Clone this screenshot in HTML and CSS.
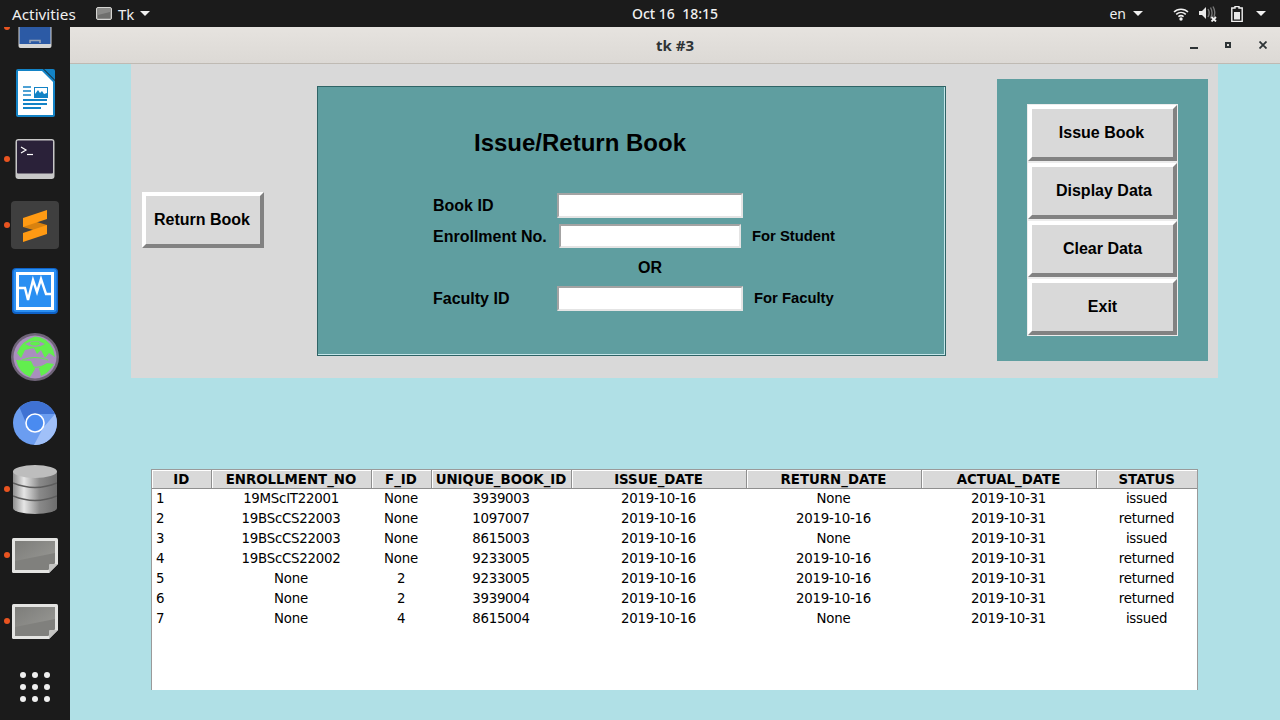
FILE: index.html
```html
<!DOCTYPE html>
<html>
<head>
    <title>tk #3</title>
    <link rel="stylesheet" href="styles.css">
</head>
<body>
    <div class="topbar">
        <div class="top_left">
            <span class="activities">Activities</span>
            <svg class="app_icon" width="16" height="13" viewBox="0 0 16 13"><rect x="0.5" y="0.5" width="15" height="12" rx="1.5" fill="#8a8a88" stroke="#d4d4d2"/><path d="M2 8 L14 5 V11 H2 Z" fill="#6f6f6d"/></svg>
            <span class="app_name">Tk</span>
            <span class="caret"></span>
        </div>
        <div class="clock">Oct 16&nbsp; 18:15</div>
        <div class="top_right">
            <span class="lang">en</span>
            <span class="caret caret_lang"></span>
            <svg class="tray_wifi" width="16" height="14" viewBox="0 0 16 14" fill="none" stroke="#f2f2f2" stroke-width="1.5"><path d="M1 5 C4.5 1.2 11.5 1.2 15 5"/><path d="M3.2 7.4 C6 4.8 10 4.8 12.8 7.4"/><path d="M5.4 9.6 C7 8.4 9 8.4 10.6 9.6"/><circle cx="8" cy="12" r="1.7" fill="#f2f2f2" stroke="none"/></svg>
            <svg class="tray_sound" width="18" height="16" viewBox="0 0 18 16"><path d="M0 5 H3 L7 1 V13 L3 9 H0 Z" fill="#e8e8e8"/><path d="M9 3 C10.5 5.5 10.5 8.5 9 11 M11.5 1.5 C13.5 5 13.5 9 11.5 12.5 M14 0.5 C16 4 16 8 15 11" fill="none" stroke="#777" stroke-width="1.4"/><path d="M12.5 11 L17 15.5 M17 11 L12.5 15.5" stroke="#f2f2f2" stroke-width="1.8"/></svg>
            <svg class="tray_batt" width="12" height="16" viewBox="0 0 12 16"><path d="M4 0.5 H8 V2 H11.2 V15.4 H0.8 V2 H4 Z" fill="none" stroke="#f2f2f2" stroke-width="1.4"/><rect x="3" y="6" width="6" height="7.5" fill="#e8e8e8"/></svg>
            <span class="caret caret_sys"></span>
        </div>
    </div>

    <div class="desk">
        <div class="dock">
            <div class="dock_item running first_item">
                <svg width="34" height="42" viewBox="0 0 34 42"><rect x="0.5" y="0" width="33" height="42" rx="2" fill="#d6d6d6"/><rect x="1.5" y="0" width="31" height="38" fill="#2c5aa5"/><path d="M12 37 V34.5 H22 V37" fill="none" stroke="#9aa6b8" stroke-width="1.5"/></svg>
            </div>
            <div class="dock_item">
                <svg width="40" height="48" viewBox="0 0 40 48"><path d="M1 2 Q1 0 3 0 H28 L40 12 V46 Q40 48 38 48 H3 Q1 48 1 46 Z" fill="#1383c6"/><path d="M3 2 H27 L38 13 V46 H3 Z" fill="#fff"/><path d="M29 0 H38 Q40 0 40 2 V11 Z" fill="#1383c6"/><path d="M8 18 H16 M8 22 H16 M8 26 H16" stroke="#1383c6" stroke-width="1.6"/><rect x="19.5" y="18.5" width="13" height="10" fill="#fff" stroke="#1383c6"/><path d="M20 28 V25 L23 21 L25 24 L27 22 L29 25 L32 24 V28 Z" fill="#1383c6"/><path d="M8 31 H32 M8 35 H32 M8 39 H26" stroke="#1383c6" stroke-width="1.8"/></svg>
            </div>
            <div class="dock_item running">
                <svg width="40" height="40" viewBox="0 0 40 40"><rect x="0.5" y="0" width="39" height="40" rx="3" fill="#c8c8c8"/><rect x="2" y="1.5" width="36" height="33" rx="1" fill="#2a2139"/><path d="M6 8 L11 11 L6 14" fill="none" stroke="#fff" stroke-width="1.2"/><path d="M12 15.5 H18" stroke="#fff" stroke-width="1.2"/></svg>
            </div>
            <div class="dock_item running">
                <svg width="48" height="48" viewBox="0 0 48 48"><rect width="48" height="48" rx="4" fill="#3f3f3f"/><path d="M12 26 L36 33 V24 L12 17 Z" fill="#d9820f"/><path d="M12 17 L36 9 V18 L12 26 Z" fill="#ff9a13"/><path d="M12 32 L36 24 V33 L12 41 Z" fill="#ff9a13"/></svg>
            </div>
            <div class="dock_item">
                <svg width="46" height="46" viewBox="0 0 46 46"><rect width="46" height="46" rx="4" fill="#0f63c9"/><rect x="1.5" y="1" width="43" height="43" rx="3" fill="#2a8ff2"/><rect x="5.5" y="5.5" width="35" height="35" fill="#2a8ff2" stroke="#fff" stroke-width="3"/><path d="M6 20 H13 L16 32 L21 12 L25 24 L29 11 L34 26 H40" fill="none" stroke="#fff" stroke-width="2.4"/></svg>
            </div>
            <div class="dock_item">
                <svg width="48" height="48" viewBox="0 0 48 48"><circle cx="24" cy="24" r="24" fill="#6f6478"/><circle cx="24" cy="24" r="21.5" fill="#a98fbe"/><path d="M6 20 Q10 8 24 3.5 Q36 4 42 16 L44 24 L38 20 L34 25 L30 17 L26 21 L23 15 L14 17 L10 25 Z" fill="#62ee4e"/><path d="M5 27 L20 28 L24 36 L19 44 Q8 40 5 27 Z" fill="#62ee4e"/><path d="M28 35 L36 30 L43 31 Q38 40 30 43 Z" fill="#62ee4e"/><path d="M14 11 Q24 5 34 11 Q24 17 14 11 Z" fill="#a98fbe"/><ellipse cx="24" cy="10.5" rx="5" ry="2" fill="#62ee4e"/><path d="M11 27 Q24 22 37 27 M18 33 Q26 36 34 32" fill="none" stroke="#62ee4e" stroke-width="1"/></svg>
            </div>
            <div class="dock_item">
                <svg width="44" height="44" viewBox="0 0 44 44"><circle cx="22" cy="22" r="22" fill="#6b9df0"/><path d="M6.5 6.5 A22 22 0 0 1 42 13 L22 13 A9 9 0 0 0 13 22 Z" fill="#3f72d3"/><path d="M42 13 A22 22 0 0 1 21 44 L30 27 Z" fill="#a0c0f8"/><circle cx="22" cy="22" r="9" fill="#4a8bf0" stroke="#fff" stroke-width="1.6"/></svg>
            </div>
            <div class="dock_item running">
                <svg width="44" height="49" viewBox="0 0 44 49"><defs><linearGradient id="db_side" x1="0" x2="1" y1="0" y2="0"><stop offset="0" stop-color="#8f8f8f"/><stop offset="0.25" stop-color="#e6e6e6"/><stop offset="0.6" stop-color="#8a8a8a"/><stop offset="1" stop-color="#6e6e6e"/></linearGradient></defs><rect x="0" y="6" width="44" height="37" fill="url(#db_side)"/><ellipse cx="22" cy="43" rx="22" ry="6" fill="url(#db_side)"/><ellipse cx="22" cy="6.5" rx="22" ry="6.5" fill="#bdbdbd"/><path d="M0 18 Q22 27 44 18 M0 31 Q22 40 44 31" fill="none" stroke="#5c5c5c" stroke-width="1.6"/></svg>
            </div>
            <div class="dock_item running">
                <svg width="46" height="35" viewBox="0 0 46 35"><defs><linearGradient id="shot_fill" x1="0" x2="1" y1="0" y2="1"><stop offset="0" stop-color="#7d7d7a"/><stop offset="1" stop-color="#9c9c98"/></linearGradient><g id="shot_icon"><path d="M1.5 0 H44.5 Q46 0 46 1.5 V26 L37 35 H1.5 Q0 35 0 33.5 V1.5 Q0 0 1.5 0 Z" fill="#e4e4e2"/><path d="M3 3 H43 V25 L36 32 H3 Z" fill="url(#shot_fill)"/><path d="M3 23 L43 15 V25 L36 32 H3 Z" fill="#80807d"/><path d="M37 35 V27 Q37 26 38 26 H46 Z" fill="#c4c4c2"/></g></defs><use href="#shot_icon"/></svg>
            </div>
            <div class="dock_item running">
                <svg width="46" height="35" viewBox="0 0 46 35"><use href="#shot_icon"/></svg>
            </div>
            <div class="dock_item">
                <div class="app_grid"><i></i><i></i><i></i><i></i><i></i><i></i><i></i><i></i><i></i></div>
            </div>
        </div>

        <div class="window">
            <div class="titlebar">
                <span class="win_title">tk #3</span>
                <div class="win_btns">
                    <svg width="8" height="3" class="btn_min" viewBox="0 0 8 3"><rect width="8" height="2" fill="#2e3436"/></svg>
                    <svg width="6" height="7" class="btn_max" viewBox="0 0 6 7"><rect width="6" height="6" fill="#2e3436"/><rect x="2" y="2" width="2" height="2" fill="#e0ddd9"/></svg>
                    <svg width="8" height="8" class="btn_close" viewBox="0 0 8 8"><path d="M0.5 0.5 L7.5 7.5 M7.5 0.5 L0.5 7.5" stroke="#2e3436" stroke-width="1.8"/></svg>
                </div>
            </div>
            <div class="app_area">
                <div class="main_panel">
                    <button class="tk_btn return_btn">Return Book</button>
                    <div class="form_box">
                        <h1 class="form_title">Issue/Return Book</h1>
                        <div class="form_row row_book">
                            <label class="form_lbl lbl_wide">Book ID</label>
                            <input type="text" class="entry">
                        </div>
                        <div class="form_row row_enroll">
                            <label class="form_lbl lbl_enroll">Enrollment No.</label>
                            <input type="text" class="entry entry_small">
                            <span class="hint">For Student</span>
                        </div>
                        <div class="or_lbl">OR</div>
                        <div class="form_row row_faculty">
                            <label class="form_lbl lbl_wide">Faculty ID</label>
                            <input type="text" class="entry">
                            <span class="hint">For Faculty</span>
                        </div>
                    </div>
                    <div class="side_box">
                        <button class="tk_btn side_btn">Issue Book</button>
                        <button class="tk_btn side_btn side_display">Display Data</button>
                        <button class="tk_btn side_btn side_clear">Clear Data</button>
                        <button class="tk_btn side_btn side_clear">Exit</button>
                    </div>
                </div>

                <div class="table_box">
                    <table class="tree">
                        <colgroup>
                            <col class="c59"><col class="c160"><col class="c60"><col class="c140"><col class="c175"><col class="c175"><col class="c175"><col class="c101">
                        </colgroup>
                        <thead>
                            <tr><th>ID</th><th>ENROLLMENT_NO</th><th>F_ID</th><th>UNIQUE_BOOK_ID</th><th>ISSUE_DATE</th><th>RETURN_DATE</th><th>ACTUAL_DATE</th><th>STATUS</th></tr>
                        </thead>
                        <tbody>
                            <tr><td>1</td><td>19MScIT22001</td><td>None</td><td>3939003</td><td>2019-10-16</td><td>None</td><td>2019-10-31</td><td>issued</td></tr>
                            <tr><td>2</td><td>19BScCS22003</td><td>None</td><td>1097007</td><td>2019-10-16</td><td>2019-10-16</td><td>2019-10-31</td><td>returned</td></tr>
                            <tr><td>3</td><td>19BScCS22003</td><td>None</td><td>8615003</td><td>2019-10-16</td><td>None</td><td>2019-10-31</td><td>issued</td></tr>
                            <tr><td>4</td><td>19BScCS22002</td><td>None</td><td>9233005</td><td>2019-10-16</td><td>2019-10-16</td><td>2019-10-31</td><td>returned</td></tr>
                            <tr><td>5</td><td>None</td><td>2</td><td>9233005</td><td>2019-10-16</td><td>2019-10-16</td><td>2019-10-31</td><td>returned</td></tr>
                            <tr><td>6</td><td>None</td><td>2</td><td>3939004</td><td>2019-10-16</td><td>2019-10-16</td><td>2019-10-31</td><td>returned</td></tr>
                            <tr><td>7</td><td>None</td><td>4</td><td>8615004</td><td>2019-10-16</td><td>None</td><td>2019-10-31</td><td>issued</td></tr>
                        </tbody>
                    </table>
                </div>
            </div>
        </div>
    </div>
</body>
</html>
```

FILE: styles.css
```css
* { box-sizing: border-box; }
html, body { margin: 0; height: 100%; }
body { width: 1280px; height: 720px; overflow: hidden; font-family: "Liberation Sans", Arial, sans-serif; background-color: #1b1b1b; display: flex; flex-direction: column; }

/* top bar */
.topbar { height: 27px; flex: none; background-color: #1b1b1b; color: #f0f0f0; font-family: "Noto Sans", sans-serif; font-size: 14px; display: grid; grid-template-columns: 1fr auto 1fr; align-items: center; position: relative; z-index: 2; }
.top_left { display: flex; align-items: center; padding-left: 12px; }
.activities { width: 84px; font-size: 15.3px; }
.app_icon { margin-right: 6px; }
.app_name { width: 22px; font-size: 15px; }
.caret { width: 0; height: 0; border-left: 5px solid transparent; border-right: 5px solid transparent; border-top: 5px solid #f0f0f0; display: block; }
.clock { margin-left: 70px; font-weight: 500; }
.top_right { display: flex; align-items: center; justify-content: flex-end; }
.lang { margin-right: 7px; }
.caret_lang { margin-right: 30px; }
.tray_wifi { margin-right: 10px; }
.tray_sound { margin-right: 14px; }
.tray_batt { margin-right: 13px; }
.caret_sys { margin-right: 14px; }

.desk { flex: 1; display: flex; min-height: 0; }

/* dock */
.dock { width: 70px; flex: none; background-color: #1b1b1b; overflow: hidden; }
.dock_item { height: 66px; display: flex; align-items: center; justify-content: center; position: relative; }
.first_item { margin-top: -33px; }
.running::before { content: ""; position: absolute; left: 4px; top: 30px; width: 6px; height: 6px; border-radius: 50%; background-color: #e95420; }
.app_grid { width: 30px; display: grid; grid-template-columns: repeat(3, 6px); gap: 6px; }
.app_grid i { width: 6px; height: 6px; border-radius: 50%; background-color: #f0f0f0; display: block; }

/* window */
.window { flex: 1; display: flex; flex-direction: column; min-width: 0; }
.titlebar { height: 37px; flex: none; background: linear-gradient(#e6e3df, #dcd9d5); border-bottom: 1px solid #bfbab3; display: flex; align-items: center; justify-content: center; position: relative; }
.win_title { font-family: "Noto Sans", sans-serif; font-weight: 700; font-size: 15px; color: #2e3436; }
.win_btns { position: absolute; left: 1120px; top: 14px; display: flex; align-items: flex-start; }
.btn_min { margin-top: 6px; margin-right: 27px; }
.btn_max { margin-top: 1px; margin-right: 28px; }

.app_area { flex: 1; background-color: #b0e0e6; padding-left: 61px; }
.main_panel { width: 1087px; height: 314px; background-color: #d9d9d9; display: flex; align-items: flex-start; }

.tk_btn { font-family: "Liberation Sans", Arial, sans-serif; font-weight: 700; font-size: 16px; color: #000; background-color: #d9d9d9; border: 4px solid; border-color: #fff #828282 #828282 #fff; padding: 0 2px 0 0; display: block; }
.return_btn { width: 122px; height: 56px; margin: 128px 0 0 11px; }

.form_box { width: 629px; height: 270px; margin: 22px 0 0 53px; background-color: #5f9ea0; border: 1px solid #2f6466; box-shadow: inset -1px -1px 0 #c4e6ea; padding-left: 115px; color: #000; }
.form_title { font-size: 24px; font-weight: 700; margin: 41px 0 0 41px; line-height: 30px; }
.form_row { display: flex; align-items: center; }
.row_book { margin-top: 35px; height: 25px; }
.row_enroll { margin-top: 6px; height: 24px; }
.row_faculty { margin-top: 7px; height: 25px; }
.form_lbl { font-size: 16px; font-weight: 700; }
.lbl_wide { width: 124px; }
.lbl_enroll { width: 126px; margin-top: 1px; }
.entry { width: 186px; height: 25px; background-color: #fff; border: 2px solid; border-color: #a3a3a3 #e4e4e4 #e4e4e4 #a3a3a3; padding: 0; }
.entry_small { width: 182px; height: 24px; }
.hint { font-size: 14.8px; font-weight: 700; margin: 0 0 2px 11px; }
.row_enroll .hint { margin-bottom: 0; }
.or_lbl { width: 434px; margin-top: 9px; text-align: center; font-size: 16px; font-weight: 700; line-height: 22px; }

.side_box { width: 211px; height: 282px; margin: 15px 0 0 51px; background-color: #5f9ea0; padding: 26px 0 0 31px; }
.side_btn { width: 149px; height: 56px; margin-bottom: 2px; box-shadow: 0 0 0 1px #ececec; }
.side_display { padding: 0 0 0 3px; }
.side_clear { padding: 0; }

/* table */
.table_box { width: 1047px; height: 221px; margin: 91px 0 0 20px; background-color: #fff; border: 1px solid #9a9a9a; border-width: 1px 1px 0 1px; }
.tree { width: 1045px; border-collapse: collapse; table-layout: fixed; font-family: "DejaVu Sans", sans-serif; font-size: 13.33px; letter-spacing: -0.25px; color: #000; }
.c59 { width: 59px; }
.c60 { width: 60px; }
.c101 { width: 101px; }
.c160 { width: 160px; }
.c140 { width: 140px; }
.c175 { width: 175px; }
.tree th { height: 18px; padding: 1px 0 0 0; background-color: #d9d9d9; font-weight: 700; letter-spacing: 0; text-align: center; border-right: 1px solid #8f8f8f; border-bottom: 1px solid #8f8f8f; box-shadow: inset 1px 1px 0 #fff; line-height: 17px; overflow: hidden; }
.tree th:last-child { border-right: 0; }
.tree td { height: 20px; padding: 0; text-align: center; line-height: 20px; overflow: hidden; white-space: nowrap; }
.tree td:first-child { text-align: left; padding-left: 4px; }
```
